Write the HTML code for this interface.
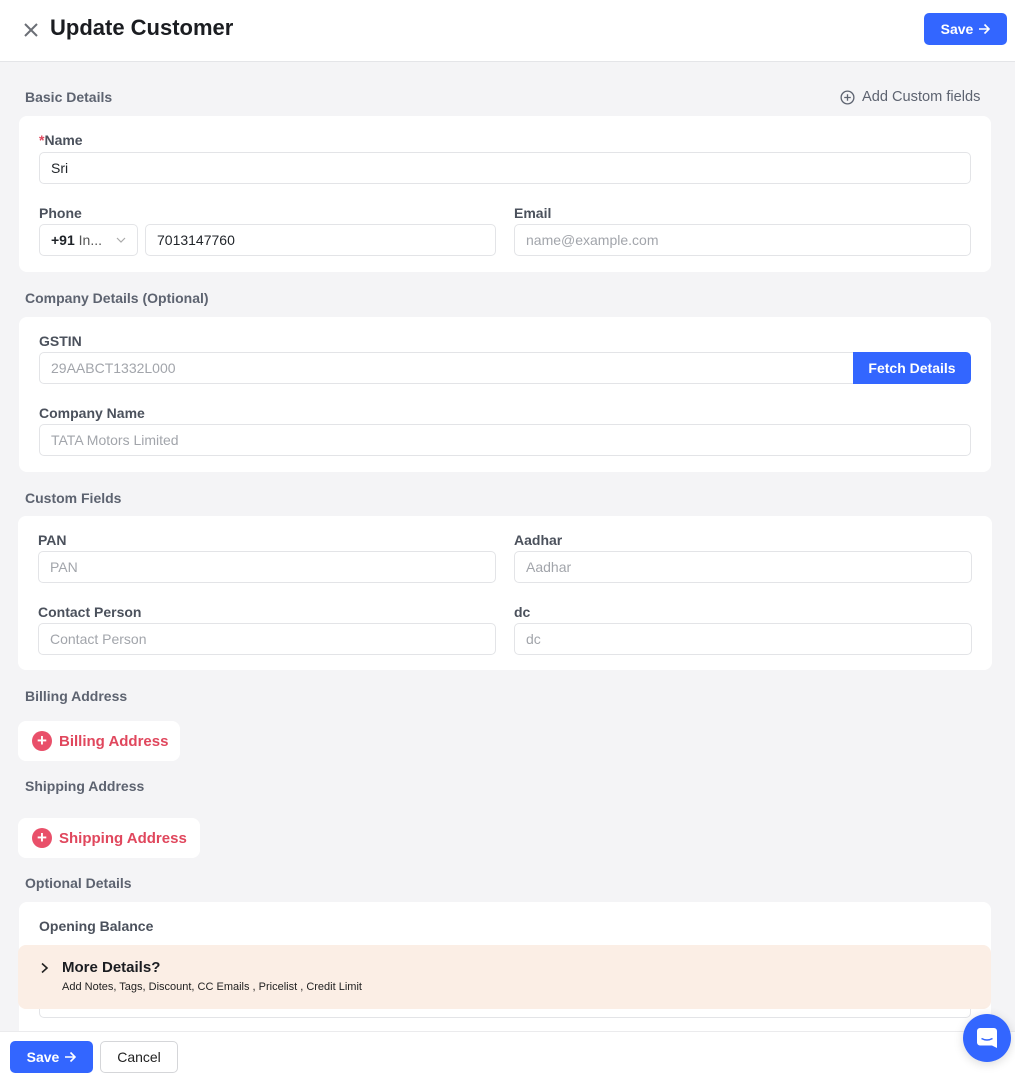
<!DOCTYPE html>
<html><head><meta charset="utf-8"><style>
*{box-sizing:border-box;margin:0;padding:0}
body{width:1015px;height:1080px;overflow:hidden;background:#f4f4f6;font-family:"Liberation Sans",sans-serif;position:relative;color:#1f2328}
.a{position:absolute}
.hdr{left:0;top:0;width:1015px;height:62px;background:#fff;border-bottom:1px solid #e4e5e8}
.sec{font-size:14px;font-weight:bold;color:#5d6370}
.card{background:#fff;border-radius:8px}
.lbl{font-size:14px;font-weight:bold;color:#4b515c}
.inp{border:1px solid #e3e4e7;border-radius:5px;height:32px;font-size:14px;padding:0 11px;line-height:30px;background:#fff}
.ph{color:#a2a5ab}
.btn{background:#3366ff;color:#fff;font-weight:bold;font-size:14px;border-radius:5px;text-align:center}
.red{color:#e0475d;font-weight:bold;font-size:15px}
.plus{display:inline-block;width:20px;height:20px;border-radius:50%;background:#e9506a;color:#fff;text-align:center;line-height:20px;font-size:17px;font-weight:bold;vertical-align:middle}
.arr{display:inline-block;vertical-align:-1px;margin-left:5px}
</style></head><body>
<div class="a hdr"></div>
<svg class="a" style="left:24px;top:23px" width="14" height="14" viewBox="0 0 14 14"><path d="M1 1L13 13M13 1L1 13" stroke="#6b6f76" stroke-width="2"/></svg>
<div class="a" style="left:50px;top:15px;font-size:22px;font-weight:bold;color:#1b1d21">Update Customer</div>
<div class="a btn" style="left:924px;top:13px;width:83px;height:32px;line-height:32px">Save<svg class="arr" width="12" height="12" viewBox="0 0 12 12"><path d="M1 6h10M6.5 1.5L11 6l-4.5 4.5" fill="none" stroke="#fff" stroke-width="1.6"/></svg></div>

<div class="a sec" style="left:25px;top:89px">Basic Details</div>
<svg class="a" style="left:840px;top:90px" width="15" height="15" viewBox="0 0 16 16"><circle cx="8" cy="8" r="6.8" fill="none" stroke="#5d6370" stroke-width="1.4"/><path d="M8 4.5v7M4.5 8h7" stroke="#5d6370" stroke-width="1.4"/></svg>
<div class="a" style="left:862px;top:89px;font-size:14.6px;line-height:16px;color:#5d6370">Add Custom fields</div>
<div class="a card" style="left:19px;top:116px;width:972px;height:156px"></div>
<div class="a lbl" style="left:39px;top:132px"><span style="color:#e0475d">*</span>Name</div>
<div class="a inp" style="left:39px;top:152px;width:932px">Sri</div>
<div class="a lbl" style="left:39px;top:205px">Phone</div>
<div class="a inp" style="left:39px;top:224px;width:99px"><b>+91</b> <span style="color:#555">In...</span><svg style="position:absolute;left:76px;top:12px" width="10" height="6" viewBox="0 0 10 6"><path d="M1 1l4 4 4-4" fill="none" stroke="#aaa" stroke-width="1.2"/></svg></div>
<div class="a inp" style="left:145px;top:224px;width:351px">7013147760</div>
<div class="a lbl" style="left:514px;top:205px">Email</div>
<div class="a inp ph" style="left:514px;top:224px;width:457px">name@example.com</div>

<div class="a sec" style="left:25px;top:290px">Company Details (Optional)</div>
<div class="a card" style="left:19px;top:317px;width:972px;height:155px"></div>
<div class="a lbl" style="left:39px;top:333px">GSTIN</div>
<div class="a inp ph" style="left:39px;top:352px;width:820px;border-radius:5px 0 0 5px">29AABCT1332L000</div>
<div class="a btn" style="left:853px;top:352px;width:118px;height:32px;line-height:32px;border-radius:0 5px 5px 0">Fetch Details</div>
<div class="a lbl" style="left:39px;top:405px">Company Name</div>
<div class="a inp ph" style="left:39px;top:424px;width:932px">TATA Motors Limited</div>

<div class="a sec" style="left:25px;top:490px">Custom Fields</div>
<div class="a card" style="left:18px;top:516px;width:974px;height:154px"></div>
<div class="a lbl" style="left:38px;top:532px">PAN</div>
<div class="a inp ph" style="left:38px;top:551px;width:458px">PAN</div>
<div class="a lbl" style="left:514px;top:532px">Aadhar</div>
<div class="a inp ph" style="left:514px;top:551px;width:458px">Aadhar</div>
<div class="a lbl" style="left:38px;top:604px">Contact Person</div>
<div class="a inp ph" style="left:38px;top:623px;width:458px">Contact Person</div>
<div class="a lbl" style="left:514px;top:604px">dc</div>
<div class="a inp ph" style="left:514px;top:623px;width:458px">dc</div>

<div class="a sec" style="left:25px;top:688px">Billing Address</div>
<div class="a card" style="left:18px;top:721px;width:162px;height:40px"></div>
<div class="a" style="left:32px;top:731px"><span class="plus">+</span><span class="red" style="margin-left:7px;vertical-align:middle">Billing Address</span></div>
<div class="a sec" style="left:25px;top:778px">Shipping Address</div>
<div class="a card" style="left:18px;top:818px;width:182px;height:40px"></div>
<div class="a" style="left:32px;top:828px"><span class="plus">+</span><span class="red" style="margin-left:7px;vertical-align:middle">Shipping Address</span></div>

<div class="a sec" style="left:25px;top:875px">Optional Details</div>
<div class="a card" style="left:19px;top:902px;width:972px;height:140px"></div>
<div class="a lbl" style="left:39px;top:918px">Opening Balance</div>
<div class="a" style="left:39px;top:990px;width:932px;height:28px;border:1px solid #e3e4e7;border-radius:5px"></div>
<div class="a" style="left:18px;top:945px;width:973px;height:64px;background:#fbeee5;border-radius:8px"></div>
<svg class="a" style="left:40px;top:962px" width="10" height="12" viewBox="0 0 10 12"><path d="M2 1.5L7 6L2 10.5" fill="none" stroke="#222" stroke-width="1.6"/></svg>
<div class="a" style="left:62px;top:959px;font-size:15px;font-weight:bold;color:#1b1d21">More Details?</div>
<div class="a" style="left:62px;top:981px;font-size:11px;color:#222">Add Notes, Tags, Discount, CC Emails , Pricelist , Credit Limit</div>

<div class="a" style="left:0;top:1031px;width:1015px;height:49px;background:#fff;border-top:1px solid #ebebed"></div>
<div class="a btn" style="left:10px;top:1041px;width:83px;height:32px;line-height:32px">Save<svg class="arr" width="12" height="12" viewBox="0 0 12 12"><path d="M1 6h10M6.5 1.5L11 6l-4.5 4.5" fill="none" stroke="#fff" stroke-width="1.6"/></svg></div>
<div class="a" style="left:100px;top:1041px;width:78px;height:32px;border:1px solid #d5d6d9;border-radius:5px;text-align:center;line-height:30px;font-size:14px;color:#222;background:#fff">Cancel</div>
<div class="a" style="left:963px;top:1014px;width:48px;height:48px;border-radius:50%;background:#3366ff;box-shadow:0 2px 10px rgba(0,0,0,.15)"></div>
<svg class="a" style="left:976px;top:1027px" width="22" height="23" viewBox="0 0 22 23"><path d="M4 1h14a3 3 0 0 1 3 3v17l-5-2.5H4a3 3 0 0 1-3-3V4a3 3 0 0 1 3-3z" fill="#fff"/><path d="M5.5 11.5q5.5 3 11 0" fill="none" stroke="#3366ff" stroke-width="1.5"/></svg>
</body></html>
